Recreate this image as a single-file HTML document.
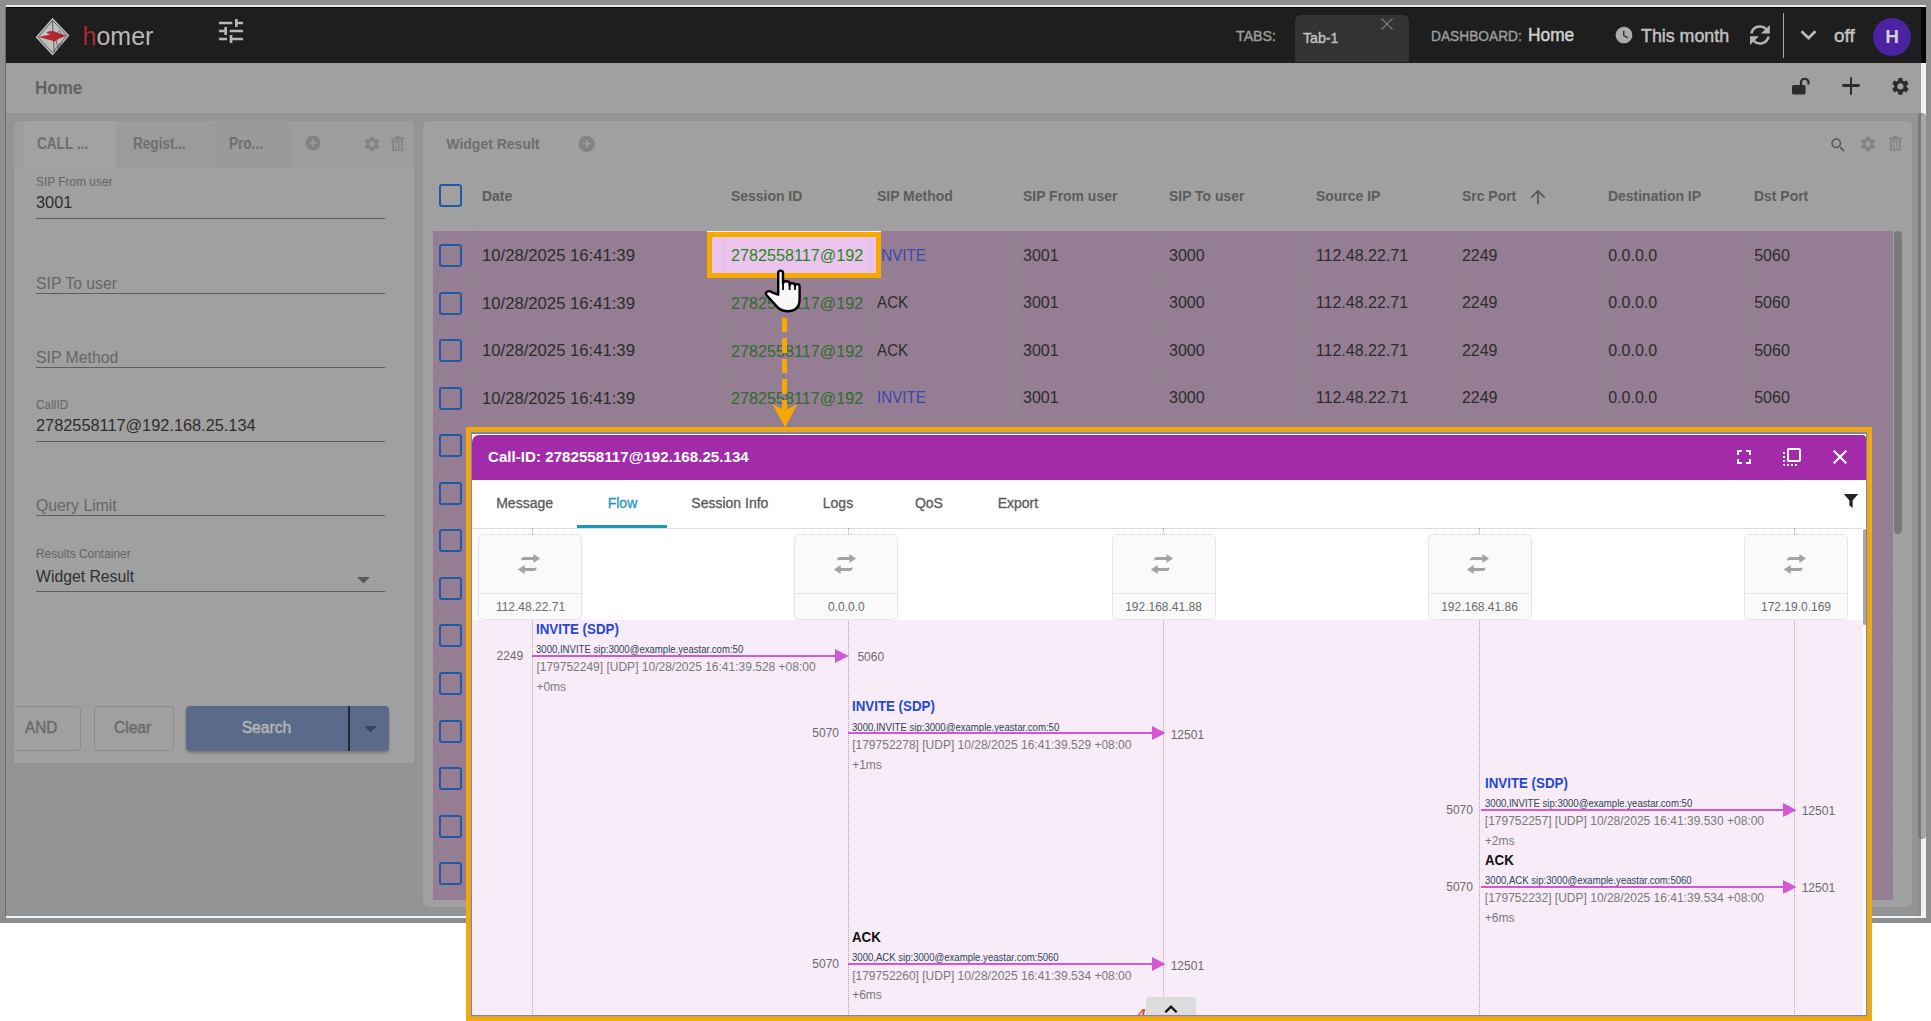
<!DOCTYPE html><html><head><meta charset="utf-8"><style>html,body{margin:0;padding:0;}body{width:1931px;height:1021px;position:relative;overflow:hidden;background:#fff;font-family:"Liberation Sans", sans-serif;}div,svg{box-sizing:border-box;}</style></head><body><div style="position:absolute;left:0px;top:0px;width:1931px;height:923px;background:#8e8e8e;"></div><div style="position:absolute;left:6px;top:5px;width:1920px;height:2px;background:#e6e8e8;"></div><div style="position:absolute;left:6px;top:7px;width:1920px;height:1px;background:#050505;"></div><div style="position:absolute;left:5px;top:8px;width:1px;height:908px;background:#6a6a6a;"></div><div style="position:absolute;left:6px;top:8px;width:1915px;height:55px;background:#1e1e1e;"></div><div style="position:absolute;left:1921px;top:8px;width:5px;height:55px;background:#050505;"></div><div style="position:absolute;left:6px;top:63px;width:1915px;height:50px;background:#a0a0a0;"></div><div style="position:absolute;left:1921px;top:63px;width:5px;height:853px;background:#eef2f5;"></div><div style="position:absolute;left:6px;top:113px;width:1912px;height:803px;background:#939496;"></div><div style="position:absolute;left:1918px;top:113px;width:8px;height:726px;background:#a6a6a6;border-radius:4px;border-left:3px solid #7a7a7a;"></div><div style="position:absolute;left:6px;top:916px;width:1920px;height:2px;background:#eef2f5;"></div><svg style="position:absolute;left:30px;top:14px;" width="45" height="45" viewBox="30 14 45 45"><path d="M52.5 18.6 L68.6 35.6 L52.5 54.5 L36.4 37.3 Z" fill="#c0c0c0" stroke="#b6b6b6" stroke-width="1.3"/><path d="M52.5 20.4 L66.8 35.6 L52.5 52.6 L38.2 37.2 Z" fill="none" stroke="#3a3a3a" stroke-width="0.7"/><path d="M52.3 20.6 L54.3 52.3" stroke="#444" stroke-width="0.8"/><path d="M38.8 37 Q44 35.6 50.5 34.4 Q47.5 33.6 46.3 32.4 Q50 30.8 54 31.2 L58 33 Q63 34.5 66.6 35.6 Q62 37.5 57.6 39.5 L55 41.4 Q46 39.2 38.8 37 Z" fill="#b2282c"/><path d="M56.5 34.2 L59.5 30.6 L62.3 35.6 M56.2 40 L57.8 48.5 L62.5 42 M58.8 43.5 L61.2 46.8" fill="none" stroke="#3a3a3a" stroke-width="0.6"/></svg><div style="position:absolute;left:82.5px;top:23.64px;font-size:25px;line-height:25px;white-space:pre;"><span style="color:#aa2b2d">h</span><span style="color:#b8b8b8">omer</span></div><svg style="position:absolute;left:215px;top:14.7px;" width="32" height="32" viewBox="0 0 24 24"><path d="M3 17v2h6v-2H3zM3 5v2h10V5H3zm10 16v-2h8v-2h-8v-2h-2v6h2zM7 9v2H3v2h4v2h2V9H7zm14 4v-2H11v2h10zm-6-4h2V7h4V5h-4V3h-2v6z" fill="#b8b8b8"/></svg><div style="position:absolute;left:1236px;top:27.88px;font-size:15.5px;line-height:15.5px;color:#9c9c9c;font-weight:normal;white-space:pre;transform:scaleX(0.917);transform-origin:left top;-webkit-text-stroke:0.45px #9c9c9c;">TABS:</div><div style="position:absolute;left:1295px;top:15px;width:114px;height:47px;background:#333333;border-radius:6px 6px 0 0;"></div><div style="position:absolute;left:1303px;top:30.28px;font-size:15.5px;line-height:15.5px;color:#c0c0c0;font-weight:normal;white-space:pre;transform:scaleX(0.915);transform-origin:left top;-webkit-text-stroke:0.45px #c0c0c0;">Tab-1</div><svg style="position:absolute;left:1380px;top:17px;" width="14" height="14" viewBox="0 0 14 14"><path d="M1.5 1.5L12.5 12.5M12.5 1.5L1.5 12.5" stroke="#7a7a7a" stroke-width="1.4"/></svg><div style="position:absolute;left:1431px;top:28.48px;font-size:15.5px;line-height:15.5px;color:#9c9c9c;font-weight:normal;white-space:pre;transform:scaleX(0.886);transform-origin:left top;-webkit-text-stroke:0.45px #9c9c9c;">DASHBOARD:</div><div style="position:absolute;left:1528px;top:25.94px;font-size:18.5px;line-height:18.5px;color:#d0d0d0;font-weight:normal;white-space:pre;transform:scaleX(0.936);transform-origin:left top;-webkit-text-stroke:0.5px #d0d0d0;">Home</div><svg style="position:absolute;left:1613.5px;top:25px;" width="20" height="20" viewBox="0 0 24 24"><path d="M12 2C6.5 2 2 6.5 2 12s4.5 10 10 10 10-4.5 10-10S17.5 2 12 2zm4.2 14.2L11 13V7h1.5v5.2l4.5 2.7-.8 1.3z" fill="#acacac"/></svg><div style="position:absolute;left:1641px;top:27.16px;font-size:18px;line-height:18px;color:#c2c2c2;font-weight:normal;white-space:pre;transform:scaleX(0.99);transform-origin:left top;-webkit-text-stroke:0.45px #c2c2c2;">This month</div><svg style="position:absolute;left:1748px;top:23px;" width="24" height="24" viewBox="0 0 24 24"><g fill="none" stroke="#b4b4b4" stroke-width="2.6"><path d="M3.4 10.4 A8.7 8.7 0 0 1 18.2 6.2"/><path d="M20.6 13.6 A8.7 8.7 0 0 1 5.8 17.8"/></g><path d="M21.8 2 V10.6 H13 Z" fill="#b4b4b4"/><path d="M2 13.2 H10.9 L2 22 Z" fill="#b4b4b4"/></svg><div style="position:absolute;left:1783px;top:13px;width:1px;height:45px;background:#a8a8a8;"></div><svg style="position:absolute;left:1798px;top:26px;" width="22" height="16" viewBox="0 0 22 16"><path d="M3.5 5.2 L10.5 12 L17.5 5.2" fill="none" stroke="#b8b8b8" stroke-width="2.7"/></svg><div style="position:absolute;left:1833.5px;top:27.16px;font-size:18px;line-height:18px;color:#c2c2c2;font-weight:normal;white-space:pre;transform:scaleX(1.05);transform-origin:left top;-webkit-text-stroke:0.45px #c2c2c2;">off</div><div style="position:absolute;left:1873px;top:18px;width:38px;height:38px;background:#4b22a1;border-radius:50%;"></div><div style="position:absolute;left:1892px;transform:translateX(-50%);top:27.42px;font-size:19px;line-height:19px;color:#cfcfcf;font-weight:bold;white-space:pre;">H</div><div style="position:absolute;left:34.8px;top:78.84px;font-size:18.5px;line-height:18.5px;color:#626262;font-weight:bold;white-space:pre;transform:scaleX(0.92);transform-origin:left top;">Home</div><svg style="position:absolute;left:1791px;top:77px;" width="20" height="18" viewBox="0 0 20 18"><rect x="1" y="8" width="13.5" height="9.5" rx="1.6" fill="#2b2c2e"/><path d="M10 9 V5.5 A3.75 3.75 0 0 1 17.5 5.5 V7.5" fill="none" stroke="#2b2c2e" stroke-width="2.2"/></svg><div style="position:absolute;left:1842px;top:84.4px;width:18px;height:2.799999999999997px;background:#2b2c2e;border-radius:1.4px;"></div><div style="position:absolute;left:1849.6px;top:77px;width:2.800000000000182px;height:17.599999999999994px;background:#2b2c2e;border-radius:1.4px;"></div><svg style="position:absolute;left:1890.4px;top:76px;" width="20.8" height="20.8" viewBox="0 0 24 24"><path d="M19.14 12.94c.04-.3.06-.61.06-.94 0-.32-.02-.64-.07-.94l2.03-1.58c.18-.14.23-.41.12-.61l-1.92-3.32c-.12-.22-.37-.29-.59-.22l-2.39.96c-.5-.38-1.030-.7-1.62-.94l-.36-2.54c-.04-.24-.24-.41-.48-.41h-3.84c-.24 0-.43.17-.47.41l-.36 2.54c-.59.24-1.13.57-1.62.94l-2.39-.96c-.22-.08-.47 0-.59.22L2.74 8.87c-.12.21-.08.47.12.61l2.03 1.58c-.05.3-.09.63-.09.94s.02.64.07.94l-2.030 1.58c-.18.14-.23.41-.12.61l1.92 3.32c.12.22.37.29.59.22l2.39-.96c.5.38 1.03.7 1.62.94l.36 2.54c.05.24.24.41.48.41h3.84c.24 0 .44-.17.47-.41l.36-2.54c.59-.24 1.13-.56 1.62-.94l2.39.96c.22.08.47 0 .59-.22l1.92-3.32c.12-.22.07-.47-.12-.61l-2.01-1.58zM12 15.6c-1.98 0-3.6-1.62-3.6-3.6s1.62-3.6 3.6-3.6 3.6 1.62 3.6 3.6-1.62 3.6-3.6 3.6z" fill="#2b2c2e"/></svg><div style="position:absolute;left:13.8px;top:120.8px;width:400.4px;height:641.8000000000001px;background:#a0a0a0;border-radius:6px 6px 0 0;"></div><div style="position:absolute;left:13.8px;top:120.8px;width:400.4px;height:47.2px;background:#9d9d9d;border-radius:6px 6px 0 0;"></div><div style="position:absolute;left:24px;top:121px;width:92px;height:47px;background:#a2a2a2;border-radius:4px 4px 0 0;"></div><div style="position:absolute;left:118px;top:121px;width:95px;height:47px;background:#9b9b9b;border-radius:4px 4px 0 0;"></div><div style="position:absolute;left:214px;top:121px;width:76px;height:47px;background:#9a9a9a;border-radius:4px 4px 0 0;"></div><div style="position:absolute;left:37.4px;top:135.99px;font-size:15.6px;line-height:15.6px;color:#6e6e6e;font-weight:bold;white-space:pre;transform:scaleX(0.87);transform-origin:left top;">CALL ...</div><div style="position:absolute;left:133px;top:135.99px;font-size:15.6px;line-height:15.6px;color:#6e6e6e;font-weight:bold;white-space:pre;transform:scaleX(0.87);transform-origin:left top;">Regist...</div><div style="position:absolute;left:228.7px;top:135.99px;font-size:15.6px;line-height:15.6px;color:#6e6e6e;font-weight:bold;white-space:pre;transform:scaleX(0.87);transform-origin:left top;">Pro...</div><svg style="position:absolute;left:304px;top:134px;" width="18" height="18" viewBox="0 0 24 24"><path d="M12 2C6.48 2 2 6.48 2 12s4.48 10 10 10 10-4.48 10-10S17.52 2 12 2zm5 11h-4v4h-2v-4H7v-2h4V7h2v4h4v2z" fill="#838383"/></svg><svg style="position:absolute;left:362.5px;top:134.5px;" width="18" height="18" viewBox="0 0 24 24"><path d="M19.14 12.94c.04-.3.06-.61.06-.94 0-.32-.02-.64-.07-.94l2.03-1.58c.18-.14.23-.41.12-.61l-1.92-3.32c-.12-.22-.37-.29-.59-.22l-2.39.96c-.5-.38-1.030-.7-1.62-.94l-.36-2.54c-.04-.24-.24-.41-.48-.41h-3.84c-.24 0-.43.17-.47.41l-.36 2.54c-.59.24-1.13.57-1.62.94l-2.39-.96c-.22-.08-.47 0-.59.22L2.74 8.87c-.12.21-.08.47.12.61l2.03 1.58c-.05.3-.09.63-.09.94s.02.64.07.94l-2.030 1.58c-.18.14-.23.41-.12.61l1.92 3.32c.12.22.37.29.59.22l2.39-.96c.5.38 1.03.7 1.62.94l.36 2.54c.05.24.24.41.48.41h3.84c.24 0 .44-.17.47-.41l.36-2.54c.59-.24 1.13-.56 1.62-.94l2.39.96c.22.08.47 0 .59-.22l1.92-3.32c.12-.22.07-.47-.12-.61l-2.01-1.58zM12 15.6c-1.98 0-3.6-1.62-3.6-3.6s1.62-3.6 3.6-3.6 3.6 1.62 3.6 3.6-1.62 3.6-3.6 3.6z" fill="#838383"/></svg><svg style="position:absolute;left:391px;top:136px;" width="13" height="15" viewBox="0 0 13 15"><g fill="#838383"><rect x="0" y="1.6" width="13" height="1.8"/><rect x="4.5" y="0" width="4" height="2"/><path d="M1.2 4.2h10.6v10.6H1.2z M3 5.6v7.8h1.6V5.6z M5.7 5.6v7.8h1.6V5.6z M8.4 5.6v7.8H10V5.6z" fill-rule="evenodd"/></g></svg><div style="position:absolute;left:36px;top:175.56px;font-size:12.8px;line-height:12.8px;color:#646464;font-weight:normal;white-space:pre;transform:scaleX(0.93);transform-origin:left top;">SIP From user</div><div style="position:absolute;left:36px;top:195.06px;font-size:16px;line-height:16px;color:#2e2e2e;font-weight:normal;white-space:pre;transform:scaleX(1.02);transform-origin:left top;">3001</div><div style="position:absolute;left:36px;top:218px;width:349px;height:1px;background:#5e5e5e;"></div><div style="position:absolute;left:36px;top:274.80px;font-size:16.3px;line-height:16.3px;color:#666666;font-weight:normal;white-space:pre;transform:scaleX(0.97);transform-origin:left top;">SIP To user</div><div style="position:absolute;left:36px;top:293px;width:349px;height:1px;background:#5e5e5e;"></div><div style="position:absolute;left:36px;top:348.70px;font-size:16.3px;line-height:16.3px;color:#666666;font-weight:normal;white-space:pre;transform:scaleX(0.97);transform-origin:left top;">SIP Method</div><div style="position:absolute;left:36px;top:367px;width:349px;height:1px;background:#5e5e5e;"></div><div style="position:absolute;left:36px;top:398.96px;font-size:12.8px;line-height:12.8px;color:#646464;font-weight:normal;white-space:pre;transform:scaleX(0.93);transform-origin:left top;">CallID</div><div style="position:absolute;left:36px;top:418.26px;font-size:16px;line-height:16px;color:#2e2e2e;font-weight:normal;white-space:pre;transform:scaleX(1.02);transform-origin:left top;">2782558117@192.168.25.134</div><div style="position:absolute;left:36px;top:441px;width:349px;height:1px;background:#5e5e5e;"></div><div style="position:absolute;left:36px;top:496.90px;font-size:16.3px;line-height:16.3px;color:#666666;font-weight:normal;white-space:pre;transform:scaleX(0.97);transform-origin:left top;">Query Limit</div><div style="position:absolute;left:36px;top:515px;width:349px;height:1px;background:#5e5e5e;"></div><div style="position:absolute;left:36px;top:548.26px;font-size:12.8px;line-height:12.8px;color:#646464;font-weight:normal;white-space:pre;transform:scaleX(0.93);transform-origin:left top;">Results Container</div><div style="position:absolute;left:36px;top:569.46px;font-size:16px;line-height:16px;color:#2e2e2e;font-weight:normal;white-space:pre;transform:scaleX(0.985);transform-origin:left top;">Widget Result</div><div style="position:absolute;left:36px;top:591px;width:349px;height:1px;background:#5e5e5e;"></div><svg style="position:absolute;left:347.7px;top:563.8px;" width="31" height="31" viewBox="0 0 24 24"><path d="M7 10l5 5 5-5z" fill="#5a5a5a"/></svg><div style="position:absolute;left:8px;top:706px;width:73px;height:45px;background:transparent;border:1px solid #8c8c8c;border-radius:4px;"></div><div style="position:absolute;left:6px;top:700px;width:8px;height:60px;background:#939496;"></div><div style="position:absolute;left:24.5px;top:719.96px;font-size:16px;line-height:16px;color:#6a6a6a;font-weight:normal;white-space:pre;transform:scaleX(0.956);transform-origin:left top;-webkit-text-stroke:0.45px #6a6a6a;">AND</div><div style="position:absolute;left:94px;top:706px;width:80px;height:45px;background:transparent;border:1px solid #8c8c8c;border-radius:4px;"></div><div style="position:absolute;left:133.4px;top:719.96px;font-size:16px;line-height:16px;color:#6a6a6a;font-weight:normal;white-space:pre;transform:translateX(-50%) scaleX(0.976);transform-origin:left top;-webkit-text-stroke:0.45px #6a6a6a;">Clear</div><div style="position:absolute;left:186px;top:706px;width:203px;height:45px;background:#5a6b8a;border-radius:4px;box-shadow:0 2px 3px rgba(0,0,0,0.25);"></div><div style="position:absolute;left:348px;top:706px;width:1.5px;height:45px;background:#222a36;"></div><div style="position:absolute;left:267px;top:719.96px;font-size:16px;line-height:16px;color:#b6b6b6;font-weight:normal;white-space:pre;transform:translateX(-50%) scaleX(0.98);transform-origin:left top;-webkit-text-stroke:0.45px #b6b6b6;">Search</div><svg style="position:absolute;left:354.5px;top:712.8px;" width="31" height="31" viewBox="0 0 24 24"><path d="M7 10l5 5 5-5z" fill="#3a4558"/></svg><div style="position:absolute;left:422.8px;top:120.8px;width:1489.0px;height:786.4000000000001px;background:#a0a0a0;border-radius:6px;"></div><div style="position:absolute;left:446.3px;top:137.45px;font-size:14px;line-height:14px;color:#6e6e6e;font-weight:bold;white-space:pre;">Widget Result</div><svg style="position:absolute;left:577px;top:134px;" width="19.5" height="19.5" viewBox="0 0 24 24"><path d="M12 2C6.48 2 2 6.48 2 12s4.48 10 10 10 10-4.48 10-10S17.52 2 12 2zm5 11h-4v4h-2v-4H7v-2h4V7h2v4h4v2z" fill="#838383"/></svg><svg style="position:absolute;left:1829.4px;top:135.6px;" width="18.4" height="18.4" viewBox="0 0 24 24"><path d="M15.5 14h-.79l-.28-.27C15.41 12.59 16 11.11 16 9.5 16 5.91 13.090 3 9.5 3S3 5.91 3 9.5 5.91 16 9.5 16c1.61 0 3.09-.59 4.23-1.57l.27.28v.79l5 4.99L20.49 19l-4.99-5zm-6 0C7.01 14 5 11.99 5 9.5S7.01 5 9.5 5 14 7.01 14 9.5 11.99 14 9.5 14z" fill="#5a5a5a"/></svg><svg style="position:absolute;left:1859px;top:134.5px;" width="18" height="18" viewBox="0 0 24 24"><path d="M19.14 12.94c.04-.3.06-.61.06-.94 0-.32-.02-.64-.07-.94l2.03-1.58c.18-.14.23-.41.12-.61l-1.92-3.32c-.12-.22-.37-.29-.59-.22l-2.39.96c-.5-.38-1.030-.7-1.62-.94l-.36-2.54c-.04-.24-.24-.41-.48-.41h-3.84c-.24 0-.43.17-.47.41l-.36 2.54c-.59.24-1.13.57-1.62.94l-2.39-.96c-.22-.08-.47 0-.59.22L2.74 8.87c-.12.21-.08.47.12.61l2.03 1.58c-.05.3-.09.63-.09.94s.02.64.07.94l-2.030 1.58c-.18.14-.23.41-.12.61l1.92 3.32c.12.22.37.29.59.22l2.39-.96c.5.38 1.03.7 1.62.94l.36 2.54c.05.24.24.41.48.41h3.84c.24 0 .44-.17.47-.41l.36-2.54c.59-.24 1.13-.56 1.62-.94l2.39.96c.22.08.47 0 .59-.22l1.92-3.32c.12-.22.07-.47-.12-.61l-2.01-1.58zM12 15.6c-1.98 0-3.6-1.62-3.6-3.6s1.62-3.6 3.6-3.6 3.6 1.62 3.6 3.6-1.62 3.6-3.6 3.6z" fill="#838383"/></svg><svg style="position:absolute;left:1889px;top:136px;" width="13" height="15" viewBox="0 0 13 15"><g fill="#838383"><rect x="0" y="1.6" width="13" height="1.8"/><rect x="4.5" y="0" width="4" height="2"/><path d="M1.2 4.2h10.6v10.6H1.2z M3 5.6v7.8h1.6V5.6z M5.7 5.6v7.8h1.6V5.6z M8.4 5.6v7.8H10V5.6z" fill-rule="evenodd"/></g></svg><div style="position:absolute;left:438.5px;top:184px;width:23.0px;height:23px;background:transparent;border:2.6px solid #1f5aa2;border-radius:3px;"></div><div style="position:absolute;left:474px;top:161px;width:1px;height:70px;background:#9a9a9a;"></div><div style="position:absolute;left:481.6px;top:188.30px;font-size:15px;line-height:15px;color:#5c5c5c;font-weight:bold;white-space:pre;transform:scaleX(0.93);transform-origin:left top;">Date</div><div style="position:absolute;left:731px;top:188.30px;font-size:15px;line-height:15px;color:#5c5c5c;font-weight:bold;white-space:pre;transform:scaleX(0.93);transform-origin:left top;">Session ID</div><div style="position:absolute;left:876.8px;top:188.30px;font-size:15px;line-height:15px;color:#5c5c5c;font-weight:bold;white-space:pre;transform:scaleX(0.93);transform-origin:left top;">SIP Method</div><div style="position:absolute;left:1023px;top:188.30px;font-size:15px;line-height:15px;color:#5c5c5c;font-weight:bold;white-space:pre;transform:scaleX(0.93);transform-origin:left top;">SIP From user</div><div style="position:absolute;left:1169px;top:188.30px;font-size:15px;line-height:15px;color:#5c5c5c;font-weight:bold;white-space:pre;transform:scaleX(0.93);transform-origin:left top;">SIP To user</div><div style="position:absolute;left:1315.8px;top:188.30px;font-size:15px;line-height:15px;color:#5c5c5c;font-weight:bold;white-space:pre;transform:scaleX(0.93);transform-origin:left top;">Source IP</div><div style="position:absolute;left:1461.9px;top:188.30px;font-size:15px;line-height:15px;color:#5c5c5c;font-weight:bold;white-space:pre;transform:scaleX(0.93);transform-origin:left top;">Src Port</div><div style="position:absolute;left:1608.2px;top:188.30px;font-size:15px;line-height:15px;color:#5c5c5c;font-weight:bold;white-space:pre;transform:scaleX(0.93);transform-origin:left top;">Destination IP</div><div style="position:absolute;left:1754.2px;top:188.30px;font-size:15px;line-height:15px;color:#5c5c5c;font-weight:bold;white-space:pre;transform:scaleX(0.93);transform-origin:left top;">Dst Port</div><svg style="position:absolute;left:1527px;top:186px;" width="22" height="22" viewBox="0 0 24 24"><path d="M4 12l1.41 1.41L11 7.83V20h2V7.830l5.58 5.59L20 12l-8-8-8 8z" fill="#5c5c5c"/></svg><div style="position:absolute;left:433px;top:231.3px;width:1460px;height:668.7px;background:#957d93;"></div><div style="position:absolute;left:433px;top:279px;width:1460px;height:1px;background:#978195;"></div><div style="position:absolute;left:433px;top:326px;width:1460px;height:1px;background:#978195;"></div><div style="position:absolute;left:433px;top:374px;width:1460px;height:1px;background:#978195;"></div><div style="position:absolute;left:433px;top:421px;width:1460px;height:1px;background:#978195;"></div><div style="position:absolute;left:433px;top:469px;width:1460px;height:1px;background:#978195;"></div><div style="position:absolute;left:433px;top:516px;width:1460px;height:1px;background:#978195;"></div><div style="position:absolute;left:433px;top:564px;width:1460px;height:1px;background:#978195;"></div><div style="position:absolute;left:433px;top:612px;width:1460px;height:1px;background:#978195;"></div><div style="position:absolute;left:433px;top:659px;width:1460px;height:1px;background:#978195;"></div><div style="position:absolute;left:433px;top:707px;width:1460px;height:1px;background:#978195;"></div><div style="position:absolute;left:433px;top:754px;width:1460px;height:1px;background:#978195;"></div><div style="position:absolute;left:433px;top:802px;width:1460px;height:1px;background:#978195;"></div><div style="position:absolute;left:433px;top:849px;width:1460px;height:1px;background:#978195;"></div><div style="position:absolute;left:474px;top:231px;width:1px;height:669px;background:#8c8a88;"></div><div style="position:absolute;left:725px;top:231px;width:1px;height:669px;background:#8c8a88;"></div><div style="position:absolute;left:870px;top:231px;width:1px;height:669px;background:#8c8a88;"></div><div style="position:absolute;left:1016px;top:231px;width:1px;height:669px;background:#8c8a88;"></div><div style="position:absolute;left:1163px;top:231px;width:1px;height:669px;background:#8c8a88;"></div><div style="position:absolute;left:1309px;top:231px;width:1px;height:669px;background:#8c8a88;"></div><div style="position:absolute;left:1456px;top:231px;width:1px;height:669px;background:#8c8a88;"></div><div style="position:absolute;left:1602px;top:231px;width:1px;height:669px;background:#8c8a88;"></div><div style="position:absolute;left:1748px;top:231px;width:1px;height:669px;background:#8c8a88;"></div><div style="position:absolute;left:1894px;top:231px;width:8px;height:303px;background:#7a7a7a;border-radius:4px;"></div><div style="position:absolute;left:438.5px;top:244px;width:23.0px;height:23px;background:transparent;border:2.6px solid #1f5aa2;border-radius:3px;"></div><div style="position:absolute;left:481.6px;top:247.23px;font-size:16.5px;line-height:16.5px;color:#2c2c2c;font-weight:normal;white-space:pre;transform:scaleX(1.01);transform-origin:left top;">10/28/2025 16:41:39</div><div style="position:absolute;left:731px;top:247.49px;font-size:16.2px;line-height:16.2px;color:#2c6e2c;font-weight:normal;white-space:pre;transform:scaleX(1.0);transform-origin:left top;">2782558117@192</div><div style="position:absolute;left:876.8px;top:247.66px;font-size:16px;line-height:16px;color:#3a48a8;font-weight:normal;white-space:pre;transform:scaleX(0.95);transform-origin:left top;">INVITE</div><div style="position:absolute;left:1023px;top:247.66px;font-size:16px;line-height:16px;color:#2c2c2c;font-weight:normal;white-space:pre;">3001</div><div style="position:absolute;left:1169px;top:247.66px;font-size:16px;line-height:16px;color:#2c2c2c;font-weight:normal;white-space:pre;">3000</div><div style="position:absolute;left:1315.8px;top:247.66px;font-size:16px;line-height:16px;color:#2c2c2c;font-weight:normal;white-space:pre;">112.48.22.71</div><div style="position:absolute;left:1461.9px;top:247.66px;font-size:16px;line-height:16px;color:#2c2c2c;font-weight:normal;white-space:pre;">2249</div><div style="position:absolute;left:1608.2px;top:247.66px;font-size:16px;line-height:16px;color:#2c2c2c;font-weight:normal;white-space:pre;">0.0.0.0</div><div style="position:absolute;left:1754.2px;top:247.66px;font-size:16px;line-height:16px;color:#2c2c2c;font-weight:normal;white-space:pre;">5060</div><div style="position:absolute;left:438.5px;top:292px;width:23.0px;height:23px;background:transparent;border:2.6px solid #1f5aa2;border-radius:3px;"></div><div style="position:absolute;left:481.6px;top:294.78px;font-size:16.5px;line-height:16.5px;color:#2c2c2c;font-weight:normal;white-space:pre;transform:scaleX(1.01);transform-origin:left top;">10/28/2025 16:41:39</div><div style="position:absolute;left:731px;top:295.04px;font-size:16.2px;line-height:16.2px;color:#2c6e2c;font-weight:normal;white-space:pre;transform:scaleX(1.0);transform-origin:left top;">2782558117@192</div><div style="position:absolute;left:876.8px;top:295.21px;font-size:16px;line-height:16px;color:#2c2c2c;font-weight:normal;white-space:pre;transform:scaleX(0.95);transform-origin:left top;">ACK</div><div style="position:absolute;left:1023px;top:295.21px;font-size:16px;line-height:16px;color:#2c2c2c;font-weight:normal;white-space:pre;">3001</div><div style="position:absolute;left:1169px;top:295.21px;font-size:16px;line-height:16px;color:#2c2c2c;font-weight:normal;white-space:pre;">3000</div><div style="position:absolute;left:1315.8px;top:295.21px;font-size:16px;line-height:16px;color:#2c2c2c;font-weight:normal;white-space:pre;">112.48.22.71</div><div style="position:absolute;left:1461.9px;top:295.21px;font-size:16px;line-height:16px;color:#2c2c2c;font-weight:normal;white-space:pre;">2249</div><div style="position:absolute;left:1608.2px;top:295.21px;font-size:16px;line-height:16px;color:#2c2c2c;font-weight:normal;white-space:pre;">0.0.0.0</div><div style="position:absolute;left:1754.2px;top:295.21px;font-size:16px;line-height:16px;color:#2c2c2c;font-weight:normal;white-space:pre;">5060</div><div style="position:absolute;left:438.5px;top:339px;width:23.0px;height:23px;background:transparent;border:2.6px solid #1f5aa2;border-radius:3px;"></div><div style="position:absolute;left:481.6px;top:342.33px;font-size:16.5px;line-height:16.5px;color:#2c2c2c;font-weight:normal;white-space:pre;transform:scaleX(1.01);transform-origin:left top;">10/28/2025 16:41:39</div><div style="position:absolute;left:731px;top:342.59px;font-size:16.2px;line-height:16.2px;color:#2c6e2c;font-weight:normal;white-space:pre;transform:scaleX(1.0);transform-origin:left top;">2782558117@192</div><div style="position:absolute;left:876.8px;top:342.76px;font-size:16px;line-height:16px;color:#2c2c2c;font-weight:normal;white-space:pre;transform:scaleX(0.95);transform-origin:left top;">ACK</div><div style="position:absolute;left:1023px;top:342.76px;font-size:16px;line-height:16px;color:#2c2c2c;font-weight:normal;white-space:pre;">3001</div><div style="position:absolute;left:1169px;top:342.76px;font-size:16px;line-height:16px;color:#2c2c2c;font-weight:normal;white-space:pre;">3000</div><div style="position:absolute;left:1315.8px;top:342.76px;font-size:16px;line-height:16px;color:#2c2c2c;font-weight:normal;white-space:pre;">112.48.22.71</div><div style="position:absolute;left:1461.9px;top:342.76px;font-size:16px;line-height:16px;color:#2c2c2c;font-weight:normal;white-space:pre;">2249</div><div style="position:absolute;left:1608.2px;top:342.76px;font-size:16px;line-height:16px;color:#2c2c2c;font-weight:normal;white-space:pre;">0.0.0.0</div><div style="position:absolute;left:1754.2px;top:342.76px;font-size:16px;line-height:16px;color:#2c2c2c;font-weight:normal;white-space:pre;">5060</div><div style="position:absolute;left:438.5px;top:387px;width:23.0px;height:23px;background:transparent;border:2.6px solid #1f5aa2;border-radius:3px;"></div><div style="position:absolute;left:481.6px;top:389.88px;font-size:16.5px;line-height:16.5px;color:#2c2c2c;font-weight:normal;white-space:pre;transform:scaleX(1.01);transform-origin:left top;">10/28/2025 16:41:39</div><div style="position:absolute;left:731px;top:390.14px;font-size:16.2px;line-height:16.2px;color:#2c6e2c;font-weight:normal;white-space:pre;transform:scaleX(1.0);transform-origin:left top;">2782558117@192</div><div style="position:absolute;left:876.8px;top:390.31px;font-size:16px;line-height:16px;color:#3a48a8;font-weight:normal;white-space:pre;transform:scaleX(0.95);transform-origin:left top;">INVITE</div><div style="position:absolute;left:1023px;top:390.31px;font-size:16px;line-height:16px;color:#2c2c2c;font-weight:normal;white-space:pre;">3001</div><div style="position:absolute;left:1169px;top:390.31px;font-size:16px;line-height:16px;color:#2c2c2c;font-weight:normal;white-space:pre;">3000</div><div style="position:absolute;left:1315.8px;top:390.31px;font-size:16px;line-height:16px;color:#2c2c2c;font-weight:normal;white-space:pre;">112.48.22.71</div><div style="position:absolute;left:1461.9px;top:390.31px;font-size:16px;line-height:16px;color:#2c2c2c;font-weight:normal;white-space:pre;">2249</div><div style="position:absolute;left:1608.2px;top:390.31px;font-size:16px;line-height:16px;color:#2c2c2c;font-weight:normal;white-space:pre;">0.0.0.0</div><div style="position:absolute;left:1754.2px;top:390.31px;font-size:16px;line-height:16px;color:#2c2c2c;font-weight:normal;white-space:pre;">5060</div><div style="position:absolute;left:438.5px;top:434px;width:23.0px;height:23px;background:transparent;border:2.6px solid #1f5aa2;border-radius:3px;"></div><div style="position:absolute;left:438.5px;top:482px;width:23.0px;height:23px;background:transparent;border:2.6px solid #1f5aa2;border-radius:3px;"></div><div style="position:absolute;left:438.5px;top:529px;width:23.0px;height:23px;background:transparent;border:2.6px solid #1f5aa2;border-radius:3px;"></div><div style="position:absolute;left:438.5px;top:577px;width:23.0px;height:23px;background:transparent;border:2.6px solid #1f5aa2;border-radius:3px;"></div><div style="position:absolute;left:438.5px;top:624px;width:23.0px;height:23px;background:transparent;border:2.6px solid #1f5aa2;border-radius:3px;"></div><div style="position:absolute;left:438.5px;top:672px;width:23.0px;height:23px;background:transparent;border:2.6px solid #1f5aa2;border-radius:3px;"></div><div style="position:absolute;left:438.5px;top:720px;width:23.0px;height:23px;background:transparent;border:2.6px solid #1f5aa2;border-radius:3px;"></div><div style="position:absolute;left:438.5px;top:767px;width:23.0px;height:23px;background:transparent;border:2.6px solid #1f5aa2;border-radius:3px;"></div><div style="position:absolute;left:438.5px;top:815px;width:23.0px;height:23px;background:transparent;border:2.6px solid #1f5aa2;border-radius:3px;"></div><div style="position:absolute;left:438.5px;top:862px;width:23.0px;height:23px;background:transparent;border:2.6px solid #1f5aa2;border-radius:3px;"></div><div style="position:absolute;left:707px;top:231px;width:174px;height:1px;background:#f0f0f0;"></div><div style="position:absolute;left:707px;top:232px;width:174px;height:46px;background:#ebc3ed;border:5px solid #f7a900;"></div><div style="position:absolute;left:724px;top:237px;width:1px;height:36px;background:#d8c0d8;"></div><div style="position:absolute;left:870px;top:237px;width:1px;height:36px;background:#d8c0d8;"></div><div style="position:absolute;left:731px;top:247.29px;font-size:16.2px;line-height:16.2px;color:#1e8a1e;font-weight:normal;white-space:pre;">2782558117@192</div><div style="position:absolute;left:782px;top:318px;width:5px;height:14px;background:#f7a900;"></div><div style="position:absolute;left:782px;top:338px;width:5px;height:15px;background:#f7a900;"></div><div style="position:absolute;left:782px;top:359px;width:5px;height:14px;background:#f7a900;"></div><div style="position:absolute;left:782px;top:379px;width:5px;height:15px;background:#f7a900;"></div><div style="position:absolute;left:782px;top:400px;width:5px;height:10px;background:#f7a900;"></div><svg style="position:absolute;left:772px;top:403px;" width="26" height="26" viewBox="0 0 26 26"><path d="M0.5 1 L13 24.5 L25.5 1 L13 7.5 Z" fill="#f7a900"/></svg><div style="position:absolute;left:466px;top:427px;width:1406px;height:594px;background:#f5a90a;"></div><div style="position:absolute;left:468.6px;top:429.6px;width:1400.8000000000002px;height:588.8px;background:transparent;border:2.6px solid #dea530;"></div><div style="position:absolute;left:471.2px;top:432px;width:1395.7px;height:583.8px;background:#8a8494;"></div><div style="position:absolute;left:472.2px;top:433.8px;width:1393.8px;height:581.0px;background:#ffffff;border-radius:0 0 2px 2px;"></div><div style="position:absolute;left:472.2px;top:435px;width:1393.8px;height:45px;background:#a32ba9;border-radius:7px 3.5px 0 0;"></div><div style="position:absolute;left:488px;top:449.30px;font-size:15px;line-height:15px;color:#ffffff;font-weight:bold;white-space:pre;transform:scaleX(1.01);transform-origin:left top;">Call-ID: 2782558117@192.168.25.134</div><svg style="position:absolute;left:1732px;top:445px;" width="24" height="24" viewBox="0 0 24 24"><path d="M7 14H5v5h5v-2H7v-3zm-2-4h2V7h3V5H5v5zm12 7h-3v2h5v-5h-2v3zM14 5v2h3v3h2V5h-5z" fill="#ffffff"/></svg><svg style="position:absolute;left:1780px;top:445px;" width="24" height="24" viewBox="0 0 24 24"><path d="M3 13h2v-2H3v2zm0 4h2v-2H3v2zm2 4v-2H3c0 1.1.89 2 2 2zM3 9h2V7H3v2zm12 12h2v-2h-2v2zm4-18H9c-1.11 0-2 .9-2 2v10c0 1.1.89 2 2 2h10c1.1 0 2-.9 2-2V5c0-1.1-.9-2-2-2zm0 12H9V5h10v10zm-8 6h2v-2h-2v2zm-4 0h2v-2H7v2z" fill="#ffffff"/></svg><svg style="position:absolute;left:1828px;top:445px;" width="24" height="24" viewBox="0 0 24 24"><path d="M19 6.41L17.59 5 12 10.59 6.41 5 5 6.41 10.59 12 5 17.59 6.41 19 12 13.41 17.59 19 19 17.590 13.41 12z" fill="#ffffff"/></svg><div style="position:absolute;left:496.2px;top:496.15px;font-size:14px;line-height:14px;color:#5a5a5a;font-weight:normal;white-space:pre;transform:scaleX(1.0);transform-origin:left top;-webkit-text-stroke:0.3px #5a5a5a;">Message</div><div style="position:absolute;left:607.7px;top:496.15px;font-size:14px;line-height:14px;color:#1b98c0;font-weight:normal;white-space:pre;transform:scaleX(1.0);transform-origin:left top;-webkit-text-stroke:0.3px #1b98c0;">Flow</div><div style="position:absolute;left:691.3px;top:496.15px;font-size:14px;line-height:14px;color:#5a5a5a;font-weight:normal;white-space:pre;transform:scaleX(1.0);transform-origin:left top;-webkit-text-stroke:0.3px #5a5a5a;">Session Info</div><div style="position:absolute;left:822.8px;top:496.15px;font-size:14px;line-height:14px;color:#5a5a5a;font-weight:normal;white-space:pre;transform:scaleX(1.0);transform-origin:left top;-webkit-text-stroke:0.3px #5a5a5a;">Logs</div><div style="position:absolute;left:914.9px;top:496.15px;font-size:14px;line-height:14px;color:#5a5a5a;font-weight:normal;white-space:pre;transform:scaleX(1.0);transform-origin:left top;-webkit-text-stroke:0.3px #5a5a5a;">QoS</div><div style="position:absolute;left:997.7px;top:496.15px;font-size:14px;line-height:14px;color:#5a5a5a;font-weight:normal;white-space:pre;transform:scaleX(1.0);transform-origin:left top;-webkit-text-stroke:0.3px #5a5a5a;">Export</div><div style="position:absolute;left:472px;top:527.5px;width:1391px;height:1.0px;background:#dcdcdc;"></div><div style="position:absolute;left:577px;top:525px;width:90px;height:3px;background:#1b98c0;"></div><svg style="position:absolute;left:1843px;top:493px;" width="16" height="16" viewBox="0 0 16 16"><path d="M0.8 1 H15.2 L9.6 7.6 V15 L6.4 12.6 V7.6 Z" fill="#222222"/></svg><div style="position:absolute;left:1863px;top:528.5px;width:3px;height:486.29999999999995px;background:#ffffff;"></div><div style="position:absolute;left:1863px;top:529px;width:3px;height:96px;background:#a8a8a8;border-radius:2px;"></div><div style="position:absolute;left:472.2px;top:620px;width:1390.8px;height:394.79999999999995px;background:#f8ecf9;"></div><div style="position:absolute;left:531.9px;top:528px;width:0;height:487.5px;border-left:1px dotted #a8a8a8;"></div><div style="position:absolute;left:847.7px;top:528px;width:0;height:487.5px;border-left:1px dotted #a8a8a8;"></div><div style="position:absolute;left:1162.9px;top:528px;width:0;height:487.5px;border-left:1px dotted #a8a8a8;"></div><div style="position:absolute;left:1479.0px;top:528px;width:0;height:487.5px;border-left:1px dotted #a8a8a8;"></div><div style="position:absolute;left:1793.9px;top:528px;width:0;height:487.5px;border-left:1px dotted #a8a8a8;"></div><div style="position:absolute;left:478px;top:534px;width:104px;height:86px;background:#fafafa;border:1px dotted #cfcfcf;border-radius:6px;"></div><div style="position:absolute;left:479px;top:593px;width:102px;height:1px;background:#e6e6e6;"></div><svg style="position:absolute;left:517.0px;top:553px;" width="24" height="22" viewBox="0 0 24 22"><g fill="#a3a3a3"><path d="M4 7.6 C4 5.5 5 4.1 7 4.1 H16.4 V1 L23.1 5.45 L16.4 9.9 V7.1 H7 C5.5 7.1 4.5 7.3 4 7.6 Z"/><path d="M19.6 14.4 C19.6 16.5 18.6 17.9 16.6 17.9 H7.7 V20.9 L0.8 16.4 L7.7 11.9 V14.9 H16.6 C18.1 14.9 19.1 14.7 19.6 14.4 Z"/></g></svg><div style="position:absolute;left:530.5px;transform:translateX(-50%);top:601.24px;font-size:12px;line-height:12px;color:#6a6a6a;font-weight:normal;white-space:pre;">112.48.22.71</div><div style="position:absolute;left:794px;top:534px;width:104px;height:86px;background:#fafafa;border:1px dotted #cfcfcf;border-radius:6px;"></div><div style="position:absolute;left:795px;top:593px;width:102px;height:1px;background:#e6e6e6;"></div><svg style="position:absolute;left:832.9px;top:553px;" width="24" height="22" viewBox="0 0 24 22"><g fill="#a3a3a3"><path d="M4 7.6 C4 5.5 5 4.1 7 4.1 H16.4 V1 L23.1 5.45 L16.4 9.9 V7.1 H7 C5.5 7.1 4.5 7.3 4 7.6 Z"/><path d="M19.6 14.4 C19.6 16.5 18.6 17.9 16.6 17.9 H7.7 V20.9 L0.8 16.4 L7.7 11.9 V14.9 H16.6 C18.1 14.9 19.1 14.7 19.6 14.4 Z"/></g></svg><div style="position:absolute;left:846.4px;transform:translateX(-50%);top:601.24px;font-size:12px;line-height:12px;color:#6a6a6a;font-weight:normal;white-space:pre;">0.0.0.0</div><div style="position:absolute;left:1112px;top:534px;width:104px;height:86px;background:#fafafa;border:1px dotted #cfcfcf;border-radius:6px;"></div><div style="position:absolute;left:1113px;top:593px;width:102px;height:1px;background:#e6e6e6;"></div><svg style="position:absolute;left:1150.0px;top:553px;" width="24" height="22" viewBox="0 0 24 22"><g fill="#a3a3a3"><path d="M4 7.6 C4 5.5 5 4.1 7 4.1 H16.4 V1 L23.1 5.45 L16.4 9.9 V7.1 H7 C5.5 7.1 4.5 7.3 4 7.6 Z"/><path d="M19.6 14.4 C19.6 16.5 18.6 17.9 16.6 17.9 H7.7 V20.9 L0.8 16.4 L7.7 11.9 V14.9 H16.6 C18.1 14.9 19.1 14.7 19.6 14.4 Z"/></g></svg><div style="position:absolute;left:1163.5px;transform:translateX(-50%);top:601.24px;font-size:12px;line-height:12px;color:#6a6a6a;font-weight:normal;white-space:pre;">192.168.41.88</div><div style="position:absolute;left:1428px;top:534px;width:104px;height:86px;background:#fafafa;border:1px dotted #cfcfcf;border-radius:6px;"></div><div style="position:absolute;left:1429px;top:593px;width:102px;height:1px;background:#e6e6e6;"></div><svg style="position:absolute;left:1466.0px;top:553px;" width="24" height="22" viewBox="0 0 24 22"><g fill="#a3a3a3"><path d="M4 7.6 C4 5.5 5 4.1 7 4.1 H16.4 V1 L23.1 5.45 L16.4 9.9 V7.1 H7 C5.5 7.1 4.5 7.3 4 7.6 Z"/><path d="M19.6 14.4 C19.6 16.5 18.6 17.9 16.6 17.9 H7.7 V20.9 L0.8 16.4 L7.7 11.9 V14.9 H16.6 C18.1 14.9 19.1 14.7 19.6 14.4 Z"/></g></svg><div style="position:absolute;left:1479.5px;transform:translateX(-50%);top:601.24px;font-size:12px;line-height:12px;color:#6a6a6a;font-weight:normal;white-space:pre;">192.168.41.86</div><div style="position:absolute;left:1744px;top:534px;width:104px;height:86px;background:#fafafa;border:1px dotted #cfcfcf;border-radius:6px;"></div><div style="position:absolute;left:1745px;top:593px;width:102px;height:1px;background:#e6e6e6;"></div><svg style="position:absolute;left:1782.5px;top:553px;" width="24" height="22" viewBox="0 0 24 22"><g fill="#a3a3a3"><path d="M4 7.6 C4 5.5 5 4.1 7 4.1 H16.4 V1 L23.1 5.45 L16.4 9.9 V7.1 H7 C5.5 7.1 4.5 7.3 4 7.6 Z"/><path d="M19.6 14.4 C19.6 16.5 18.6 17.9 16.6 17.9 H7.7 V20.9 L0.8 16.4 L7.7 11.9 V14.9 H16.6 C18.1 14.9 19.1 14.7 19.6 14.4 Z"/></g></svg><div style="position:absolute;left:1796px;transform:translateX(-50%);top:601.24px;font-size:12px;line-height:12px;color:#6a6a6a;font-weight:normal;white-space:pre;">172.19.0.169</div><div style="position:absolute;left:536.4px;top:622.52px;font-size:13.8px;line-height:13.8px;color:#2448d8;font-weight:bold;white-space:pre;transform:scaleX(0.965);transform-origin:left top;">INVITE (SDP)</div><div style="position:absolute;left:536.4px;top:645.17px;font-size:10.2px;line-height:10.2px;color:#2d4458;font-weight:normal;white-space:pre;transform:scaleX(0.94);transform-origin:left top;">3000,INVITE sip:3000@example.yeastar.com:50</div><div style="position:absolute;left:532.4px;top:654.9000000000001px;width:303.1px;height:2.0px;background:#d455d6;"></div><svg style="position:absolute;left:835.0px;top:648.9000000000001px;" width="14" height="14" viewBox="0 0 14 14"><path d="M0 0 L13.5 7 L0 14 Z" fill="#d455d6"/></svg><div style="position:absolute;right:1407.8000000000002px;top:649.64px;font-size:12px;line-height:12px;color:#6a6a6a;font-weight:normal;white-space:pre;">2249</div><div style="position:absolute;left:857.4000000000001px;top:651.34px;font-size:12px;line-height:12px;color:#6a6a6a;font-weight:normal;white-space:pre;">5060</div><div style="position:absolute;left:536.4px;top:661.34px;font-size:12px;line-height:12px;color:#787878;font-weight:normal;white-space:pre;transform:scaleX(1.0);transform-origin:left top;">[179752249] [UDP] 10/28/2025 16:41:39.528 +08:00</div><div style="position:absolute;left:536.4px;top:681.14px;font-size:12px;line-height:12px;color:#787878;font-weight:normal;white-space:pre;">+0ms</div><div style="position:absolute;left:852.2px;top:699.92px;font-size:13.8px;line-height:13.8px;color:#2448d8;font-weight:bold;white-space:pre;transform:scaleX(0.965);transform-origin:left top;">INVITE (SDP)</div><div style="position:absolute;left:852.2px;top:722.57px;font-size:10.2px;line-height:10.2px;color:#2d4458;font-weight:normal;white-space:pre;transform:scaleX(0.94);transform-origin:left top;">3000,INVITE sip:3000@example.yeastar.com:50</div><div style="position:absolute;left:848.2px;top:732.3000000000001px;width:304.0px;height:2.0px;background:#d455d6;"></div><svg style="position:absolute;left:1151.7px;top:726.3000000000001px;" width="14" height="14" viewBox="0 0 14 14"><path d="M0 0 L13.5 7 L0 14 Z" fill="#d455d6"/></svg><div style="position:absolute;right:1092.0px;top:727.04px;font-size:12px;line-height:12px;color:#6a6a6a;font-weight:normal;white-space:pre;">5070</div><div style="position:absolute;left:1170.7px;top:728.74px;font-size:12px;line-height:12px;color:#6a6a6a;font-weight:normal;white-space:pre;">12501</div><div style="position:absolute;left:852.2px;top:738.74px;font-size:12px;line-height:12px;color:#787878;font-weight:normal;white-space:pre;transform:scaleX(1.0);transform-origin:left top;">[179752278] [UDP] 10/28/2025 16:41:39.529 +08:00</div><div style="position:absolute;left:852.2px;top:758.54px;font-size:12px;line-height:12px;color:#787878;font-weight:normal;white-space:pre;">+1ms</div><div style="position:absolute;left:1484.8px;top:776.62px;font-size:13.8px;line-height:13.8px;color:#2448d8;font-weight:bold;white-space:pre;transform:scaleX(0.965);transform-origin:left top;">INVITE (SDP)</div><div style="position:absolute;left:1484.8px;top:799.27px;font-size:10.2px;line-height:10.2px;color:#2d4458;font-weight:normal;white-space:pre;transform:scaleX(0.94);transform-origin:left top;">3000,INVITE sip:3000@example.yeastar.com:50</div><div style="position:absolute;left:1480.8px;top:809.0px;width:302.60000000000014px;height:2.0px;background:#d455d6;"></div><svg style="position:absolute;left:1782.9px;top:803.0px;" width="14" height="14" viewBox="0 0 14 14"><path d="M0 0 L13.5 7 L0 14 Z" fill="#d455d6"/></svg><div style="position:absolute;right:458.10000000000014px;top:803.74px;font-size:12px;line-height:12px;color:#6a6a6a;font-weight:normal;white-space:pre;">5070</div><div style="position:absolute;left:1801.7px;top:805.44px;font-size:12px;line-height:12px;color:#6a6a6a;font-weight:normal;white-space:pre;">12501</div><div style="position:absolute;left:1484.8px;top:815.44px;font-size:12px;line-height:12px;color:#787878;font-weight:normal;white-space:pre;transform:scaleX(1.0);transform-origin:left top;">[179752257] [UDP] 10/28/2025 16:41:39.530 +08:00</div><div style="position:absolute;left:1484.8px;top:835.24px;font-size:12px;line-height:12px;color:#787878;font-weight:normal;white-space:pre;">+2ms</div><div style="position:absolute;left:1484.8px;top:853.62px;font-size:13.8px;line-height:13.8px;color:#111111;font-weight:bold;white-space:pre;transform:scaleX(0.965);transform-origin:left top;">ACK</div><div style="position:absolute;left:1484.8px;top:876.27px;font-size:10.2px;line-height:10.2px;color:#2d4458;font-weight:normal;white-space:pre;transform:scaleX(0.94);transform-origin:left top;">3000,ACK sip:3000@example.yeastar.com:5060</div><div style="position:absolute;left:1480.8px;top:886.0px;width:302.60000000000014px;height:2.0px;background:#d455d6;"></div><svg style="position:absolute;left:1782.9px;top:880.0px;" width="14" height="14" viewBox="0 0 14 14"><path d="M0 0 L13.5 7 L0 14 Z" fill="#d455d6"/></svg><div style="position:absolute;right:458.10000000000014px;top:880.74px;font-size:12px;line-height:12px;color:#6a6a6a;font-weight:normal;white-space:pre;">5070</div><div style="position:absolute;left:1801.7px;top:882.44px;font-size:12px;line-height:12px;color:#6a6a6a;font-weight:normal;white-space:pre;">12501</div><div style="position:absolute;left:1484.8px;top:892.44px;font-size:12px;line-height:12px;color:#787878;font-weight:normal;white-space:pre;transform:scaleX(1.0);transform-origin:left top;">[179752232] [UDP] 10/28/2025 16:41:39.534 +08:00</div><div style="position:absolute;left:1484.8px;top:912.24px;font-size:12px;line-height:12px;color:#787878;font-weight:normal;white-space:pre;">+6ms</div><div style="position:absolute;left:852.2px;top:930.72px;font-size:13.8px;line-height:13.8px;color:#111111;font-weight:bold;white-space:pre;transform:scaleX(0.965);transform-origin:left top;">ACK</div><div style="position:absolute;left:852.2px;top:953.37px;font-size:10.2px;line-height:10.2px;color:#2d4458;font-weight:normal;white-space:pre;transform:scaleX(0.94);transform-origin:left top;">3000,ACK sip:3000@example.yeastar.com:5060</div><div style="position:absolute;left:848.2px;top:963.1px;width:304.0px;height:2.0px;background:#d455d6;"></div><svg style="position:absolute;left:1151.7px;top:957.1px;" width="14" height="14" viewBox="0 0 14 14"><path d="M0 0 L13.5 7 L0 14 Z" fill="#d455d6"/></svg><div style="position:absolute;right:1092.0px;top:957.84px;font-size:12px;line-height:12px;color:#6a6a6a;font-weight:normal;white-space:pre;">5070</div><div style="position:absolute;left:1170.7px;top:959.54px;font-size:12px;line-height:12px;color:#6a6a6a;font-weight:normal;white-space:pre;">12501</div><div style="position:absolute;left:852.2px;top:969.54px;font-size:12px;line-height:12px;color:#787878;font-weight:normal;white-space:pre;transform:scaleX(1.0);transform-origin:left top;">[179752260] [UDP] 10/28/2025 16:41:39.534 +08:00</div><div style="position:absolute;left:852.2px;top:989.34px;font-size:12px;line-height:12px;color:#787878;font-weight:normal;white-space:pre;">+6ms</div><div style="position:absolute;left:1137.5px;top:1007.33px;font-size:14.5px;line-height:14.5px;color:#e84a10;font-weight:bold;white-space:pre;font-style:italic;">40</div><div style="position:absolute;left:1146px;top:997px;width:50px;height:18.5px;background:#dcdcdc;border-radius:4px 4px 0 0;"></div><svg style="position:absolute;left:1160px;top:999px;" width="22" height="16" viewBox="0 0 22 16"><path d="M6.2 12.4 L11 7.6 L15.8 12.4" fill="none" stroke="#151515" stroke-width="2.3" stroke-linecap="square"/></svg><div style="position:absolute;left:471.2px;top:1014.8px;width:1395.7px;height:1.0px;background:#8a8494;"></div><div style="position:absolute;left:466px;top:1015.8px;width:1406px;height:5.2000000000000455px;background:#f5a90a;"></div><div style="position:absolute;left:468.6px;top:1015.8px;width:1400.8000000000002px;height:2.6000000000000227px;background:#dea530;"></div><svg style="position:absolute;left:763px;top:267px;" width="40" height="48" viewBox="0 0 40 48"><g transform="translate(2,2)"><path d="M13.2 25.7 V4 Q13.2 1.6 15.6 1.6 Q18 1.6 18 4 V14.5 Q18 12.2 21.3 12.2 Q24.6 12.2 24.6 14.5 V16 Q24.6 14.2 27.3 14.2 Q30 14.2 30 16 V17 Q30 15.1 32.3 15.1 Q34.6 15.1 34.6 17.5 V30 Q34.6 42.2 22.5 42.2 Q15 42.2 10.5 36 L1.8 26.5 Q-0.2 24 2 22.7 Q4.2 21.3 7 23.3 Z" fill="#f8f8f8" stroke="#000" stroke-width="2.4" stroke-linejoin="round"/><path d="M18 14.5 V21 M24.6 16 V21 M30 17 V21" stroke="#000" stroke-width="1.8"/></g></svg></body></html>
